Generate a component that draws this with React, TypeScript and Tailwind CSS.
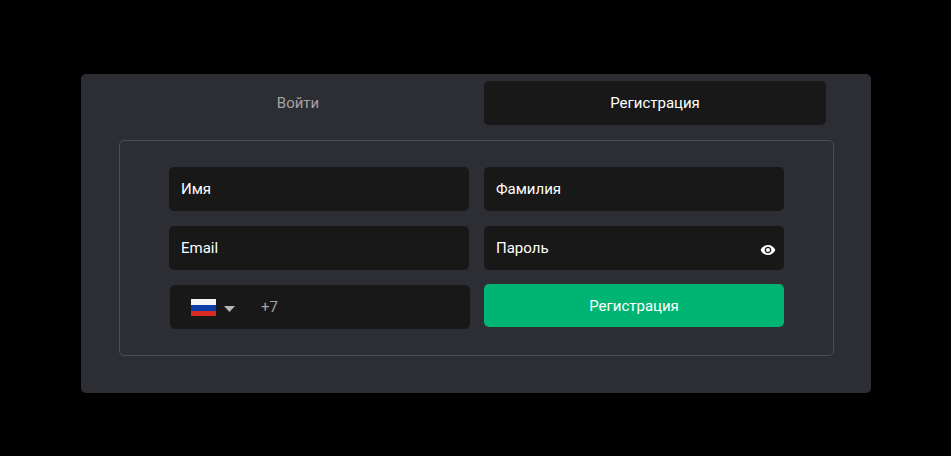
import { MdVisibility } from "react-icons/md";

const font = "font-['Roboto',sans-serif]";

function Field({ label, children }: { label: string; children?: React.ReactNode }) {
  return (
    <div className="flex h-11 w-[300px] items-center justify-between rounded-[5px] bg-[#181818] pl-3 pr-2 text-[15px] text-white">
      <span>{label}</span>
      {children}
    </div>
  );
}

export default function App() {
  return (
    <div className={`h-[456px] w-[951px] overflow-hidden bg-black pt-[74px] pl-[81px] ${font}`}>
      <div className="h-[319px] w-[790px] rounded-[5px] bg-[#2d2e33] pt-[7px]">
        <div className="ml-[46px] flex w-[699px] gap-[15px] text-[15px]">
          <button className="h-11 flex-1 rounded-[5px] pt-px text-[#a3a3a3]">Войти</button>
          <button className="h-11 flex-1 rounded-[5px] bg-[#181818] pt-px text-white">Регистрация</button>
        </div>
        <div className="mt-[15px] ml-[38px] h-[216px] w-[715px] rounded-[5px] border border-[#4d4e53] pt-[26px] pl-[49px]">
          <div className="grid w-[615px] grid-cols-[300px_300px] gap-x-[15px] gap-y-[15px]">
            <Field label="Имя" />
            <Field label="Фамилия" />
            <Field label="Email" />
            <Field label="Пароль">
              <MdVisibility size={16} className="mt-[3px] text-white" />
            </Field>
            <div className="ml-px flex h-11 w-[300px] items-center rounded-[5px] bg-[#181818] text-[15px]">
              <svg width="25" height="17" viewBox="0 0 25 17" className="ml-[21px]" aria-hidden="true">
                <rect width="25" height="6" fill="#f4f4f4" />
                <rect y="6" width="25" height="6" fill="#0b3ea8" />
                <rect y="12" width="25" height="5" fill="#d92b20" />
              </svg>
              <svg width="11" height="6" viewBox="0 0 11 6" className="ml-[8px] mt-[3px]" aria-hidden="true">
                <path d="M0 0h11L5.5 6z" fill="#b4b8bd" />
              </svg>
              <span className="ml-[26px] text-[#a3a3a3]">+7</span>
            </div>
            <button className="-mt-px h-[43px] w-[300px] rounded-[5px] bg-[#00b574] pt-px text-[15px] text-white">
              Регистрация
            </button>
          </div>
        </div>
      </div>
    </div>
  );
}
